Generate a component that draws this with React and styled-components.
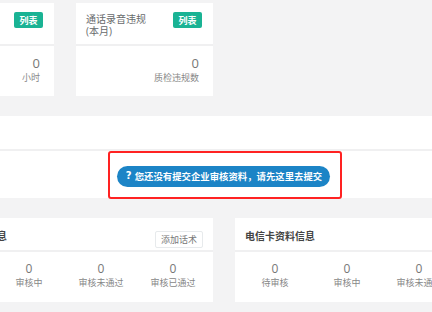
import React from 'react';
import styled, { createGlobalStyle } from 'styled-components';

const GlobalStyle = createGlobalStyle`
  html, body {
    margin: 0;
    padding: 0;
    background: #f3f3f4;
    overflow: hidden;
  }
  body {
    font-family: 'Open Sans', 'Noto Sans CJK SC', sans-serif;
    color: #676a6c;
  }
`;

const Page = styled.div`
  width: 614px;
  margin-left: -83px;
  padding-top: 3px;
  display: flex;
  flex-direction: column;
  gap: 20px;
`;

const Row = styled.div`
  display: grid;
  grid-template-columns: repeat(${({ cols }) => cols}, 1fr);
  column-gap: 22px;
`;

const Card = styled.div`
  background: #fff;
  display: flex;
  flex-direction: column;
`;

const CardHead = styled.div`
  display: flex;
  justify-content: space-between;
  align-items: flex-start;
  height: ${({ h }) => h}px;
  padding: ${({ pt }) => pt}px 11px 0 10px;
  box-sizing: border-box;
  border-bottom: 2px solid #f0f0f1;
`;

const Title = styled.div`
  font-size: 10px;
  line-height: 12px;
  padding-top: 1px;
  color: ${({ strong }) => (strong ? '#444' : '#676a6c')};
  font-weight: ${({ strong }) => (strong ? 700 : 400)};
`;

const Badge = styled.span`
  display: inline-flex;
  align-items: center;
  justify-content: center;
  width: 29px;
  height: 16px;
  border-radius: 2px;
  background: #1ab394;
  color: #fff;
  font-size: 9px;
  font-weight: 700;
`;

const SmallButton = styled.span`
  display: inline-flex;
  align-items: center;
  justify-content: center;
  height: 17px;
  padding: 0 5px;
  margin-top: 2px;
  margin-right: -1px;
  border: 1px solid #e7eaec;
  border-radius: 2px;
  box-sizing: border-box;
  background: #fff;
  color: #777;
  font-size: 9px;
`;

const StatBody = styled.div`
  height: 50px;
  box-sizing: border-box;
  padding: 9px 14px 0;
  text-align: right;
`;

const Number = styled.div`
  font-size: 13px;
  line-height: 16px;
  color: #777;
`;

const Label = styled.div`
  font-size: 9px;
  line-height: 12px;
  color: #888;
  margin-top: 1px;
`;

const Panel = styled.div`
  background: #fff;
`;

const PanelHead = styled.div`
  height: 33px;
  border-bottom: 2px solid #f0f0f1;
`;

const PanelBody = styled.div`
  height: 47px;
  display: flex;
  justify-content: center;
  align-items: flex-start;
  padding-left: 2px;
`;

const Highlight = styled.div`
  border: 2px solid #f22;
  border-radius: 3px;
  padding: 9px 10px 10px 7px;
`;

const NoticeButton = styled.div`
  display: inline-flex;
  align-items: center;
  gap: 3px;
  height: 21px;
  padding: 0 8px 0 9px;
  border-radius: 11px;
  background: #1c84c6;
  color: #fff;
  font-size: 9.4px;
  font-weight: 700;
  white-space: nowrap;
`;

const QMark = styled.span`
  font-family: 'DejaVu Sans', sans-serif;
  font-weight: 700;
  font-size: 10px;
  line-height: 1;
`;

const Stats = styled.div`
  height: 50px;
  box-sizing: border-box;
  padding: 9px 4px 0;
  display: grid;
  grid-template-columns: repeat(4, 1fr);
  text-align: center;
`;

const StatCell = styled.div`
  display: flex;
  flex-direction: column;
`;

const StatNum = styled.div`
  font-size: 12px;
  line-height: 16px;
  color: #777;
`;

const StatLabel = styled.div`
  font-size: 9px;
  line-height: 12px;
  color: #888;
`;

function TopCard({ title, value, unit }) {
  return (
    <Card>
      <CardHead h={43} pt={9}>
        <Title>{title}</Title>
        <Badge>列表</Badge>
      </CardHead>
      <StatBody>
        <Number>{value}</Number>
        <Label>{unit}</Label>
      </StatBody>
    </Card>
  );
}

function AuditCard({ title, action }) {
  const items = ['待审核', '审核中', '审核未通过', '审核已通过'];
  return (
    <Card>
      <CardHead h={34} pt={11}>
        <Title strong>{title}</Title>
        {action && <SmallButton>{action}</SmallButton>}
      </CardHead>
      <Stats>
        {items.map((label) => (
          <StatCell key={label}>
            <StatNum>0</StatNum>
            <StatLabel>{label}</StatLabel>
          </StatCell>
        ))}
      </Stats>
    </Card>
  );
}

export default function App() {
  return (
    <>
      <GlobalStyle />
      <Page>
        <Row cols={4}>
          <TopCard
            title={<>通话时长<br />(本月)</>}
            value="0"
            unit="小时"
          />
          <TopCard
            title={<>通话录音违规<br />(本月)</>}
            value="0"
            unit="质检违规数"
          />
        </Row>
        <Panel>
          <PanelHead />
          <PanelBody>
            <Highlight>
              <NoticeButton>
                <QMark>?</QMark>
                您还没有提交企业审核资料，请先这里去提交
              </NoticeButton>
            </Highlight>
          </PanelBody>
        </Panel>
        <Row cols={2}>
          <AuditCard title="企业审核资料信息" action="添加话术" />
          <AuditCard title="电信卡资料信息" />
        </Row>
      </Page>
    </>
  );
}
